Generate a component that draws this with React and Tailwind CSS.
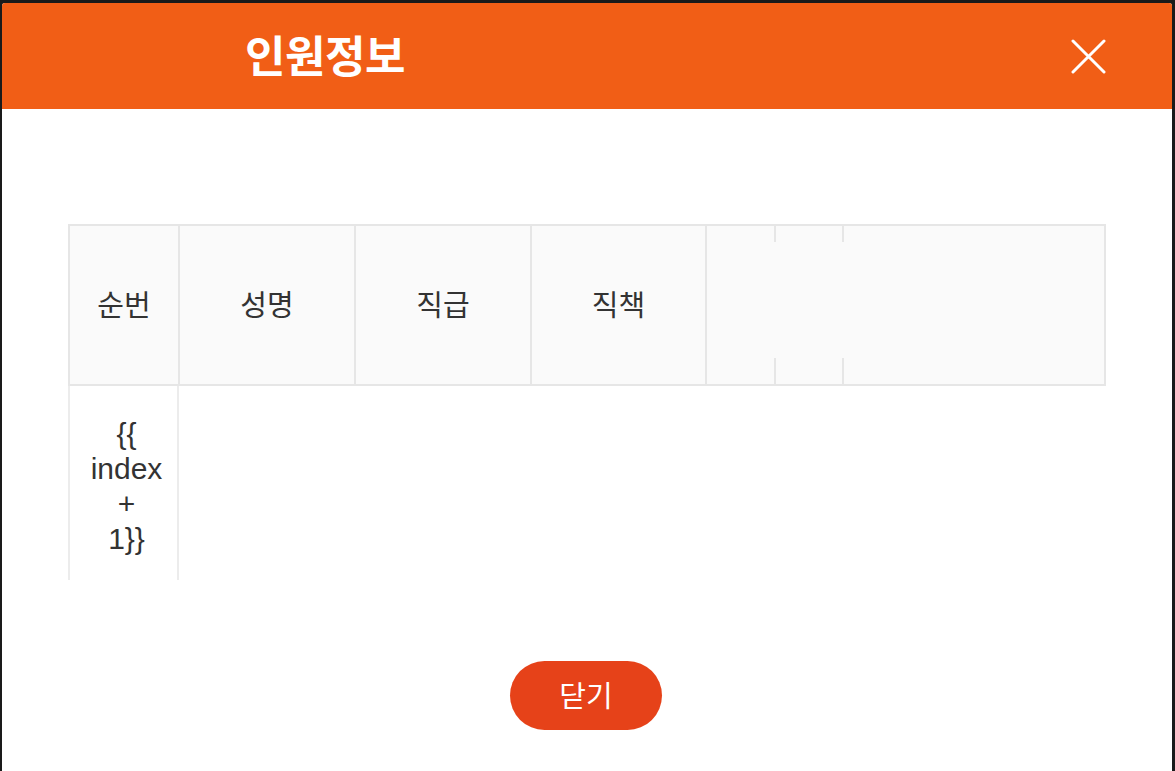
import React from "react";

const font = { fontFamily: '"Malgun Gothic", "Noto Sans", "Noto Sans CJK KR", sans-serif' };
const cellFont = { fontFamily: '"Liberation Sans", "Noto Sans CJK KR", sans-serif' };

function HeadCell({ w, children, last }) {
  return (
    <div
      className={`${w} h-full flex items-center justify-center text-[29px] text-[#333] ${last ? "" : "border-r-2 border-[#e6e6e6]"}`}
    >
      {children}
    </div>
  );
}

function SplitCell({ w }) {
  return (
    <div className={`${w} h-full flex flex-col`}>
      <div className="h-[16px] border-r-2 border-[#e6e6e6]" />
      <div className="flex-1" />
      <div className="h-[26px] border-r-2 border-[#e6e6e6]" />
    </div>
  );
}

export default function App() {
  return (
    <div className="w-[1175px] h-[771px] overflow-hidden bg-[#1a1a1a] pt-[3px] pl-[2px] pr-[3px]" style={font}>
      <div className="h-full bg-white rounded-t-[3px] overflow-hidden flex flex-col">
        <div className="h-[106px] shrink-0 bg-[#f15e16] flex items-center pl-[243px] pr-[66px]">
          <h1 className="flex-1 text-white font-bold text-[44px] leading-none tracking-[-0.5px]">인원정보</h1>
          <svg width="35" height="35" viewBox="0 0 35 35" className="mt-[1px]">
            <path d="M2 2 L33 33 M33 2 L2 33" stroke="white" strokeWidth="3" strokeLinecap="round" />
          </svg>
        </div>
        <div className="px-[66px] pt-[115px]">
          <div className="h-[162px] flex border-2 border-[#e6e6e6] bg-[#fafafa]">
            <HeadCell w="w-[110px]">순번</HeadCell>
            <HeadCell w="w-[176px]">성명</HeadCell>
            <HeadCell w="w-[176px]">직급</HeadCell>
            <HeadCell w="w-[175px]">직책</HeadCell>
            <SplitCell w="w-[69px]" />
            <SplitCell w="w-[68px]" />
            <div className="flex-1" />
          </div>
          <div
            className="w-[111px] h-[194px] border-l-2 border-r-2 border-[#ececec] flex flex-col items-center pt-[30px] pl-[6px] text-[30px] leading-[35px] text-[#333] text-center"
            style={cellFont}
          >
            <span className="block">{"{{"}</span>
            <span className="block">index</span>
            <span className="block">+</span>
            <span className="block">{"1}}"}</span>
          </div>
          <div className="flex justify-center pt-[81px] pr-[2px]">
            <button className="w-[152px] h-[69px] rounded-full bg-[#e64219] text-white text-[29px] flex items-center justify-center">
              닫기
            </button>
          </div>
        </div>
      </div>
    </div>
  );
}
